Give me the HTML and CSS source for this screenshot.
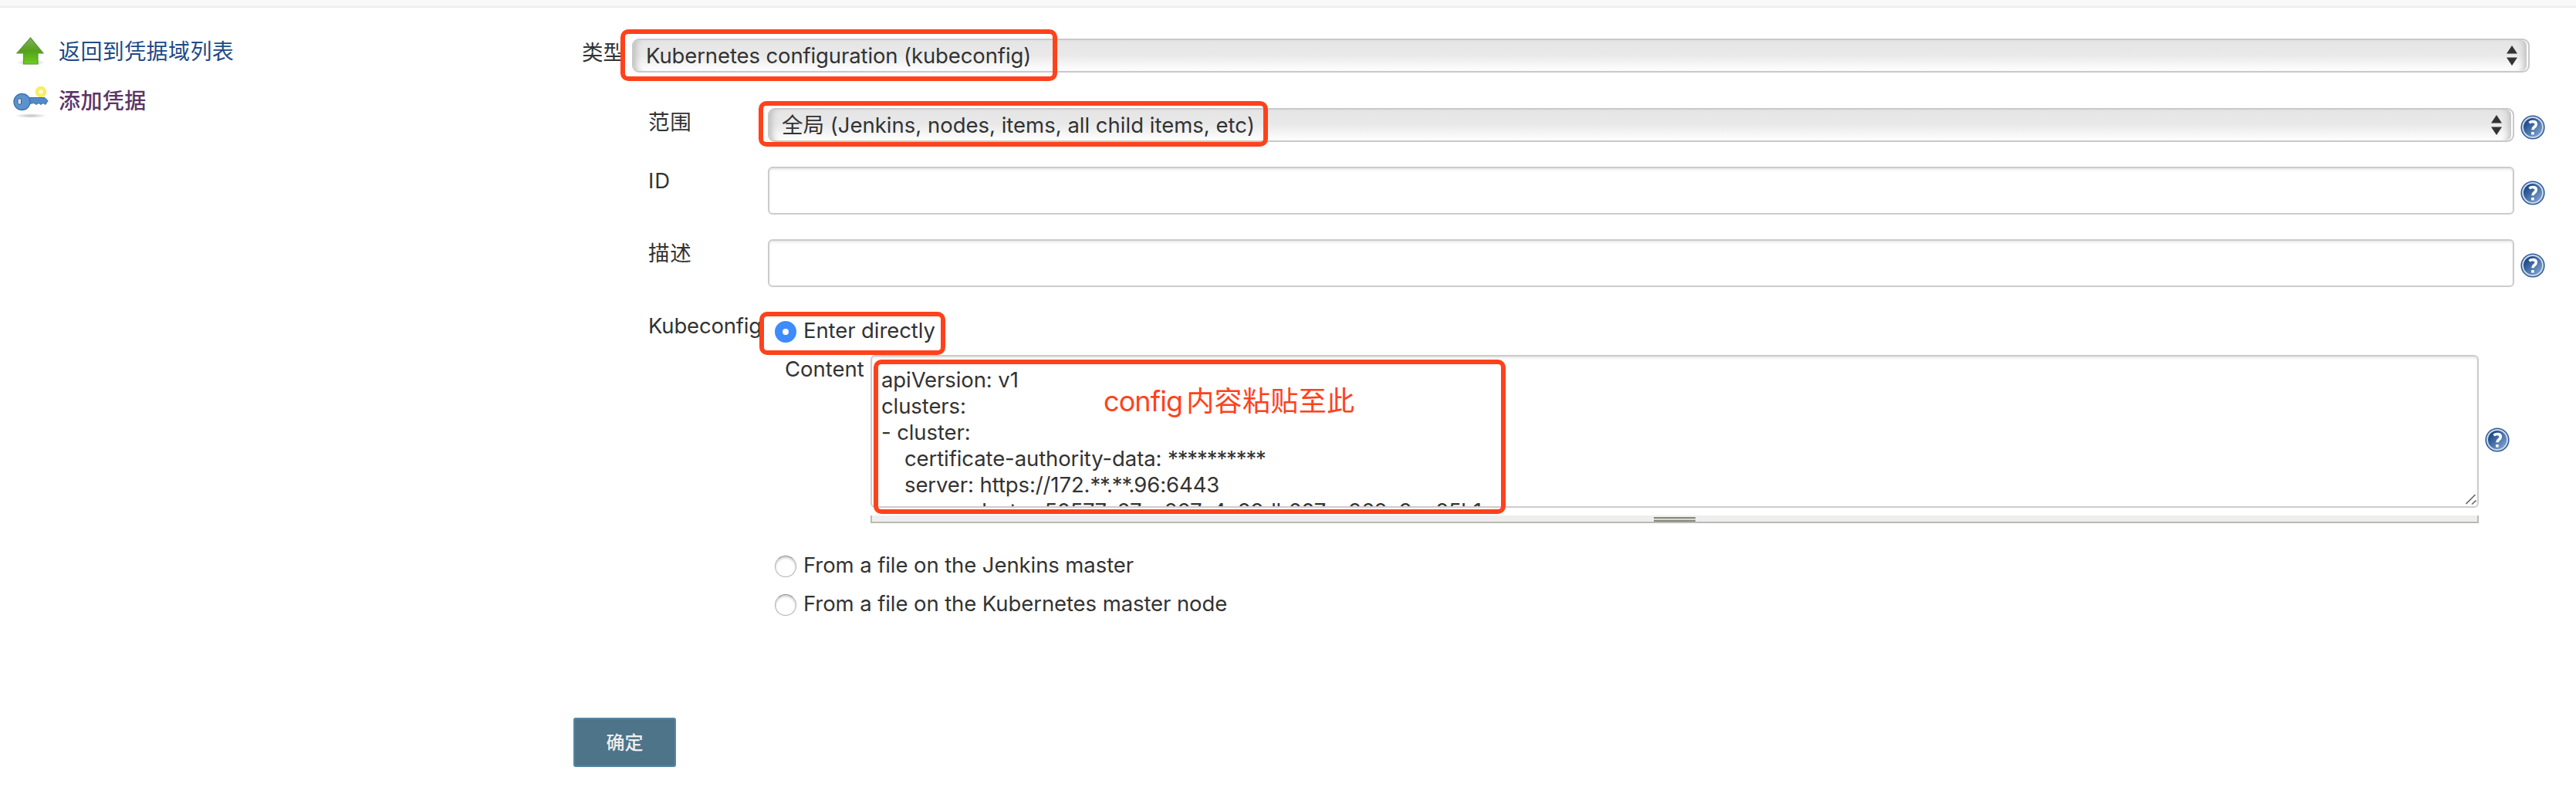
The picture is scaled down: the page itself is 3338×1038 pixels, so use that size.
FILE: index.html
```html
<!DOCTYPE html>
<html lang="zh-CN">
<head>
<meta charset="utf-8">
<title>添加凭据</title>
<link rel="stylesheet" href="styles.css">
</head>
<body>
<svg class="defs" width="0" height="0" aria-hidden="true">
  <defs>
    <linearGradient id="helpFill" x1="0" y1="0" x2="1" y2="1"><stop offset=".2" stop-color="#1d4a88"/><stop offset="1" stop-color="#8fb2dc"/></linearGradient>
    <linearGradient id="arrowFill" x1="0" y1="0" x2="0" y2="1"><stop offset="0" stop-color="#7db355"/><stop offset=".5" stop-color="#55a01c"/><stop offset="1" stop-color="#6bd01c"/></linearGradient>
    <radialGradient id="shade"><stop offset="0" stop-color="#000" stop-opacity=".25"/><stop offset="1" stop-color="#000" stop-opacity="0"/></radialGradient>
    <symbol id="help" viewBox="0 0 32 32">
      <circle cx="16" cy="16" r="15.6" fill="#315c98"/>
      <circle cx="16" cy="16" r="13" fill="url(#helpFill)" stroke="#c9d7ea" stroke-width="2"/>
      <path d="M11.500 10.200c2.500-2.300 8.800-2.500 8.800 1.800 0 3.600-4.400 3.400-4.400 7.200M15.900 22v3.600" fill="none" stroke="#fff" stroke-width="3.600"/>
    </symbol>
    <symbol id="updown" viewBox="0 0 14 26"><path d="M7 0l7 10.500H0zM7 26l7-10.500H0z" fill="#333"/></symbol>
  </defs>
</svg>
<header class="topbar"></header>
<div class="page">
  <nav class="side">
    <a class="task" href="#">
      <svg class="task-icon" viewBox="0 0 48 48"><ellipse cx="24" cy="39" rx="19" ry="4" fill="url(#shade)"/><path d="M23.500 7L40 27h-7v14H14.500V27H6z" fill="url(#arrowFill)" stroke="#5f9a38" stroke-width="1.200"/></svg>
      <span>返回到凭据域列表</span>
    </a>
    <a class="task current" href="#">
      <svg class="task-icon" viewBox="0 0 48 48"><ellipse cx="24" cy="44" rx="21" ry="3" fill="url(#shade)"/><circle cx="37" cy="13" r="5" fill="#fffbe0" stroke="#f8ee62" stroke-width="4.500"/><path d="M22 20.500h20l4 4-3 5-3-2-3 2-3-2-3 2-3-2-6 1z" fill="#5389c4" stroke="#3d6da5"/><circle cx="12.500" cy="26" r="10.500" fill="#5c92cd" stroke="#4274ad" stroke-width="1.400"/><rect x="7" y="22" width="4.500" height="7" rx="1" fill="#dfe4e8" stroke="#3f5c7d"/></svg>
      <span>添加凭据</span>
    </a>
  </nav>
  <main class="form">
    <div class="row row-kind">
      <label class="label-kind">类型</label>
      <div class="select"><span class="t-kind">Kubernetes configuration (kubeconfig)</span><svg class="arrows"><use href="#updown"/></svg></div>
      <i class="mark mark-kind"></i>
    </div>
    <div class="row row-scope">
      <label class="label">范围</label>
      <div class="select"><span>全局 (Jenkins, nodes, items, all child items, etc)</span><svg class="arrows"><use href="#updown"/></svg></div>
      <svg class="help"><use href="#help"/></svg>
      <i class="mark mark-scope"></i>
    </div>
    <div class="row row-input">
      <label class="label">ID</label>
      <div class="input"></div>
      <svg class="help"><use href="#help"/></svg>
    </div>
    <div class="row row-input">
      <label class="label">描述</label>
      <div class="input"></div>
      <svg class="help"><use href="#help"/></svg>
    </div>
    <div class="row row-config">
      <label class="label">Kubeconfig</label>
      <div class="radio-line"><span class="radio on"></span><span class="option">Enter directly</span><i class="mark mark-enter"></i></div>
    </div>
    <div class="row row-content">
      <label class="label-content">Content</label>
      <div class="editor">
        <pre class="textarea">apiVersion: v1
clusters:
- cluster:
<span class="ind"></span>certificate-authority-data: <span class="stars">**********</span>
<span class="ind"></span>server: https://172.<span class="stars">**.**.</span>96:6443
<span class="ind"></span><span class="name">name: cluster-50577c27ea867c4e89db207ea968e9ce85b1</span></pre>
        <svg class="resize" viewBox="0 0 14 14"><path d="M.5 13L12.500 1M8 13.500l5.500-5" stroke="#666" stroke-width="1.600"/></svg>
        <div class="handle"><span class="grip"></span></div>
        <i class="mark mark-content"></i>
        <span class="note">config<b>内容粘贴至此</b></span>
      </div>
      <svg class="help"><use href="#help"/></svg>
    </div>
    <div class="radio-line alt"><span class="radio"></span><span class="option">From a file on the Jenkins master</span></div>
    <div class="radio-line alt"><span class="radio"></span><span class="option">From a file on the Kubernetes master node</span></div>
    <button class="submit">确定</button>
  </main>
</div>
</body>
</html>
```
FILE: styles.css
```css
* { box-sizing: border-box; }
body {
  margin: 0;
  background: #fff;
  color: #333;
  font: 27.5px/34px Inter, "Noto Sans CJK SC", sans-serif;
}
.defs { position: absolute; }
.topbar { height: 10px; background: #f8f8f8; border-bottom: 2px solid #e9edf1; }
.page { display: flex; }
.side { width: 743px; padding: 32px 0 0 16px; }
.task {
  display: flex; align-items: center; gap: 12px;
  height: 48px; margin-bottom: 16px;
  color: #204a87; text-decoration: none; font-size: 28px; letter-spacing: .4px;
}
.task span { padding-top: 1px; }
.task-icon { width: 48px; height: 48px; }
.current { color: #5c3566; font-weight: 500; }
.form { width: 2595px; padding-top: 40px; }
.row { display: flex; position: relative; }
.row-kind { height: 90px; padding-left: 11px; }
.label-kind { width: 65px; padding-top: 1px; }
.label { width: 155px; flex: none; padding-top: 1px; white-space: nowrap; letter-spacing: -.2px; }
.row-scope .label, .row-input .label { letter-spacing: .8px; }
.select {
  height: 44px; flex: none;
  display: flex; align-items: center; justify-content: space-between;
  padding: 0 14px 0 16px;
  border: 2px solid #c9c9c9; border-radius: 9px;
  background: linear-gradient(#e5e5e5, #e9e9e9 48%, #fff);
  box-shadow: inset -2px 0 0 #fff, inset 10px 0 8px -7px #bbb, inset -12px 0 8px -7px #bbb;
  white-space: nowrap;
}
.row-kind .select { width: 2459px; }
.row-scope .select { width: 2263px; }
.t-kind { letter-spacing: -.12px; }
.arrows { width: 14px; height: 26px; }
.row-scope { height: 76px; padding-left: 97px; }
.help { width: 32px; height: 32px; margin: 9px 0 0 8px; flex: none; }
.row-input { height: 94px; padding-left: 97px; }
.row-input .help { margin-top: 18px; }
.input {
  width: 2263px; height: 62px;
  border: 2px solid #ccc; border-radius: 6px;
  box-shadow: inset 0 2px 3px rgba(0,0,0,.09);
}
.row-config { height: 56px; padding-left: 97px; }
.radio-line { position: relative; display: flex; align-items: center; gap: 9px; margin-left: 9px; height: 28px; margin-top: 12px; }
.option { letter-spacing: -.09px; margin-top: -4px; }
.radio {
  width: 28px; height: 28px; border-radius: 50%;
  border: 1px solid #b2b2b2; border-top-color: #8d8d8d;
  box-shadow: inset 0 2px 3px rgba(0,0,0,.2);
}
.radio.on { border: 10px solid #3e8bfb; box-shadow: none; }
.row-content { height: 218px; padding-left: 274px; }
.label-content { width: 111px; padding-top: 1px; }
.editor { width: 2084px; position: relative; }
.textarea {
  height: 198px; margin: 0; padding: 13px 12px 0;
  overflow: hidden;
  border: 2px solid #ccc; border-radius: 6px;
  box-shadow: inset 0 2px 3px rgba(0,0,0,.09);
  font: inherit; letter-spacing: -.1px;
}
.ind { display: inline-block; width: 30px; }
.stars { letter-spacing: -1.1px; }
.name { letter-spacing: -.42px; }
.resize { position: absolute; right: 3px; top: 180px; width: 14px; height: 14px; }
.handle {
  display: flex; justify-content: center;
  height: 10px; margin-top: 10px;
  background: #eee; border: solid #b9bab3; border-width: 0 2px 2px;
}
.grip { width: 54px; height: 6px; margin-top: 2px; background: #d3d7cf; border: solid #888a80; border-width: 2px 0; }
.row-content .help { margin-top: 94px; }
.alt { margin: 0 0 22px 261px; }
.row-content + .alt { margin-top: 42px; }
.mark { position: absolute; border: 6px solid #ff421b; border-radius: 10px; pointer-events: none; }
.mark-kind { left: 61px; top: -12px; width: 566px; height: 67px; }
.mark-scope { left: 240px; top: -9px; width: 660px; height: 59px; }
.mark-enter { left: -20px; top: -12px; width: 241px; height: 56px; }
.mark-content { left: 4px; top: 6px; width: 819px; height: 200px; }
.note { position: absolute; left: 302px; top: 36px; color: #ff421b; font-size: 36px; line-height: 48px; letter-spacing: -.9px; white-space: nowrap; }
.note b { font-weight: 400; letter-spacing: .4px; margin-left: 5px; }
.submit {
  display: block; width: 133px; height: 64px; margin-top: 132px; padding: 0 0 2px;
  border: 2px solid #5788a2; border-radius: 3px;
  background: #4d7489; color: #eee;
  font: 500 24px/34px "Noto Sans CJK SC", sans-serif;
}
```
